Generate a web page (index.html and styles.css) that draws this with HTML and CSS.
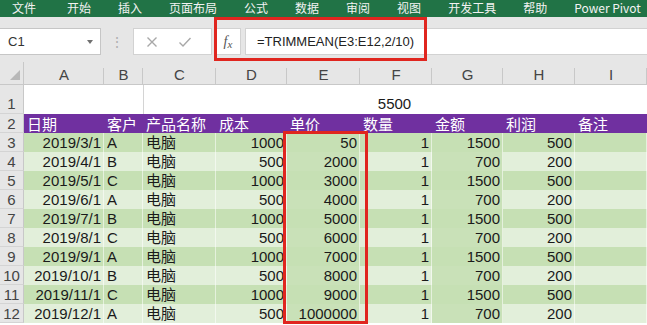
FILE: index.html
```html
<!DOCTYPE html>
<html lang="zh">
<head>
<meta charset="utf-8">
<title>Excel TRIMMEAN</title>
<link rel="stylesheet" href="styles.css">
</head>
<body>
<div class="app">
  <div class="ribbon">
    <span>文件</span><span class="t2">开始</span><span>插入</span><span>页面布局</span><span>公式</span><span>数据</span><span>审阅</span><span>视图</span><span>开发工具</span><span>帮助</span><span>Power Pivot</span>
  </div>
  <div class="toolbar">
    <div class="namebox"><span class="nb-text">C1</span><span class="caret"></span></div>
    <div class="dots">⋮</div>
    <div class="btnbox">
      <svg class="ico" width="12" height="12" viewBox="0 0 12 12"><path d="M1.5 1.5 L10.5 10.5 M10.5 1.5 L1.5 10.5" stroke="#a8a8a8" stroke-width="1.4" fill="none"/></svg>
      <svg class="ico" width="14" height="12" viewBox="0 0 14 12"><path d="M1.5 6.5 L5 10 L12.5 2" stroke="#a8a8a8" stroke-width="1.4" fill="none"/></svg>
    </div>
    <div class="fxbox"><span class="fx-f">f</span><span class="fx-x">x</span></div>
    <div class="formula">=TRIMMEAN(E3:E12,2/10)</div>
  </div>
  <div class="sheet">
    <div class="grid">
      <div class="corner"><span class="tri"></span></div>
      <div class="ch">A</div><div class="ch">B</div><div class="ch">C</div><div class="ch">D</div><div class="ch">E</div><div class="ch">F</div><div class="ch">G</div><div class="ch">H</div><div class="ch">I</div>

      <div class="rh r1">1</div>
      <div class="c1 blank"></div><div class="c1 blank"></div>
      <div class="c1 merged">5500</div>

      <div class="rh">2</div>
      <div class="hd">日期</div><div class="hd">客户</div><div class="hd">产品名称</div><div class="hd">成本</div><div class="hd">单价</div><div class="hd">数量</div><div class="hd">金额</div><div class="hd">利润</div><div class="hd">备注</div>

      <div class="rh">3</div>
      <div class="d dk r">2019/3/1</div><div class="d dk">A</div><div class="d dk">电脑</div><div class="d dk r">1000</div><div class="d dk r">50</div><div class="d dk r">1</div><div class="d dk r">1500</div><div class="d dk r">500</div><div class="d dk"></div>

      <div class="rh">4</div>
      <div class="d lt r">2019/4/1</div><div class="d lt">B</div><div class="d lt">电脑</div><div class="d lt r">500</div><div class="d md r">2000</div><div class="d lt r">1</div><div class="d md r">700</div><div class="d lt r">200</div><div class="d lt"></div>

      <div class="rh">5</div>
      <div class="d dk r">2019/5/1</div><div class="d dk">C</div><div class="d dk">电脑</div><div class="d dk r">1000</div><div class="d dk r">3000</div><div class="d dk r">1</div><div class="d dk r">1500</div><div class="d dk r">500</div><div class="d dk"></div>

      <div class="rh">6</div>
      <div class="d lt r">2019/6/1</div><div class="d lt">A</div><div class="d lt">电脑</div><div class="d lt r">500</div><div class="d md r">4000</div><div class="d lt r">1</div><div class="d md r">700</div><div class="d lt r">200</div><div class="d lt"></div>

      <div class="rh">7</div>
      <div class="d dk r">2019/7/1</div><div class="d dk">B</div><div class="d dk">电脑</div><div class="d dk r">1000</div><div class="d dk r">5000</div><div class="d dk r">1</div><div class="d dk r">1500</div><div class="d dk r">500</div><div class="d dk"></div>

      <div class="rh">8</div>
      <div class="d lt r">2019/8/1</div><div class="d lt">C</div><div class="d lt">电脑</div><div class="d lt r">500</div><div class="d md r">6000</div><div class="d lt r">1</div><div class="d md r">700</div><div class="d lt r">200</div><div class="d lt"></div>

      <div class="rh">9</div>
      <div class="d dk r">2019/9/1</div><div class="d dk">A</div><div class="d dk">电脑</div><div class="d dk r">1000</div><div class="d dk r">7000</div><div class="d dk r">1</div><div class="d dk r">1500</div><div class="d dk r">500</div><div class="d dk"></div>

      <div class="rh">10</div>
      <div class="d lt r">2019/10/1</div><div class="d lt">B</div><div class="d lt">电脑</div><div class="d lt r">500</div><div class="d md r">8000</div><div class="d lt r">1</div><div class="d md r">700</div><div class="d lt r">200</div><div class="d lt"></div>

      <div class="rh">11</div>
      <div class="d dk r">2019/11/1</div><div class="d dk">C</div><div class="d dk">电脑</div><div class="d dk r">1000</div><div class="d dk r">9000</div><div class="d dk r">1</div><div class="d dk r">1500</div><div class="d dk r">500</div><div class="d dk"></div>

      <div class="rh">12</div>
      <div class="d lt r">2019/12/1</div><div class="d lt">A</div><div class="d lt">电脑</div><div class="d lt r">500</div><div class="d md r">1000000</div><div class="d lt r">1</div><div class="d md r">700</div><div class="d lt r">200</div><div class="d lt"></div>
    </div>
  </div>
  <div class="mark mark-formula"></div>
  <div class="mark mark-range"></div>
</div>
</body>
</html>
```
FILE: styles.css
```css
html, body {
  margin: 0;
  padding: 0;
  background: #ffffff;
}
.app {
  position: relative;
  width: 647px;
  height: 325px;
  overflow: hidden;
  font-family: "Liberation Sans", "Noto Sans CJK SC", sans-serif;
  color: #1a1a1a;
}
.ribbon {
  height: 17px;
  background: #217346;
  color: #f2f2f2;
  display: flex;
  align-items: flex-end;
  gap: 27px;
  padding-left: 12px;
  box-sizing: border-box;
  padding-bottom: 3px;
  font-size: 12px;
  line-height: 13px;
  font-family: "Noto Sans CJK SC", "Liberation Sans", sans-serif;
  white-space: nowrap;
  overflow: hidden;
}
.ribbon span {
  flex-shrink: 0;
}
.ribbon .t2 {
  margin-left: 4px;
}
.toolbar {
  height: 45px;
  background: #e6e6e6;
  display: flex;
  align-items: flex-start;
  padding-top: 11px;
  box-sizing: border-box;
}
.namebox {
  width: 101px;
  height: 27px;
  box-sizing: border-box;
  background: #ffffff;
  border: 1px solid #c6c6c6;
  border-left: none;
  display: flex;
  align-items: center;
  justify-content: space-between;
  padding: 0 7px 0 8px;
  font-size: 13px;
  color: #333;
}
.caret {
  width: 0;
  height: 0;
  border-left: 3.5px solid transparent;
  border-right: 3.5px solid transparent;
  border-top: 4px solid #707070;
}
.dots {
  width: 32px;
  height: 27px;
  display: flex;
  align-items: center;
  justify-content: center;
  color: #b0b0b0;
  font-size: 14px;
}
.btnbox {
  width: 79px;
  height: 27px;
  box-sizing: border-box;
  background: #ffffff;
  border: 1px solid #d2d2d2;
  display: flex;
  align-items: center;
  padding-left: 12px;
  gap: 20px;
}
.fxbox {
  margin-left: 3px;
  width: 26px;
  height: 27px;
  box-sizing: border-box;
  background: #ffffff;
  border: 1px solid #d2d2d2;
  display: flex;
  align-items: center;
  justify-content: center;
  font-family: "Liberation Serif", serif;
  font-style: italic;
  color: #555;
}
.fx-f {
  font-size: 14px;
}
.fx-x {
  font-size: 11px;
  margin-top: 4px;
}
.formula {
  margin-left: 4px;
  flex: 1;
  height: 27px;
  box-sizing: border-box;
  background: #ffffff;
  border: 1px solid #d2d2d2;
  border-right: none;
  font-size: 13px;
  line-height: 25px;
  padding-left: 11px;
  color: #222;
}
.grid {
  display: grid;
  grid-template-columns: 24px 80px 39px 73px 71px 73px 72px 71px 72px 72px;
  grid-template-rows: 23px 29px 19px repeat(10, 19px);
}
.corner {
  background: #e6e6e6;
  border-right: 1px solid #c8c8c8;
  border-bottom: 1px solid #c8c8c8;
  position: relative;
}
.tri {
  position: absolute;
  right: 3px;
  bottom: 4px;
  width: 0;
  height: 0;
  border-left: 10px solid transparent;
  border-bottom: 10px solid #b8b8b8;
}
.ch {
  background: #e6e6e6;
  border-bottom: 1px solid #c8c8c8;
  position: relative;
  text-align: center;
  font-size: 15px;
  line-height: 26px;
  color: #444;
}
.ch::after {
  content: "";
  position: absolute;
  right: 0;
  top: 6px;
  bottom: 0;
  width: 1px;
  background: #c8c8c8;
}
.rh {
  background: #e6e6e6;
  border-right: 1px solid #c8c8c8;
  border-bottom: 1px solid #d4d4d4;
  text-align: center;
  font-size: 15px;
  line-height: 19px;
  color: #444;
  box-sizing: border-box;
}
.rh.r1 {
  line-height: 38px;
}
.c1 {
  background: #ffffff;
}
.merged {
  grid-column: 4 / 11;
  border-left: 1px solid #d4d4d4;
  text-align: center;
  font-size: 15px;
  line-height: 38px;
  padding-right: 2px;
  color: #1a1a1a;
}
.hd {
  background: #7030a0;
  color: #ffffff;
  font-size: 15px;
  line-height: 19px;
  padding-left: 3px;
  white-space: nowrap;
  font-family: "Noto Sans CJK SC", sans-serif;
}
.d {
  font-size: 15px;
  line-height: 20px;
  padding: 0 2px 0 3px;
  white-space: nowrap;
  overflow: hidden;
  border-right: 1px solid rgba(255, 255, 255, 0.55);
  box-sizing: border-box;
}
.d.r {
  text-align: right;
}
.dk {
  background: #c6e0b4;
}
.lt {
  background: #e2efda;
}
.md {
  background: #c9e1b8;
}
.mark {
  position: absolute;
  border: 3px solid #e0261f;
  box-sizing: border-box;
  pointer-events: none;
}
.mark-formula {
  left: 214px;
  top: 17px;
  width: 213px;
  height: 44px;
}
.mark-range {
  left: 283px;
  top: 131px;
  width: 85px;
  height: 193px;
}
```
